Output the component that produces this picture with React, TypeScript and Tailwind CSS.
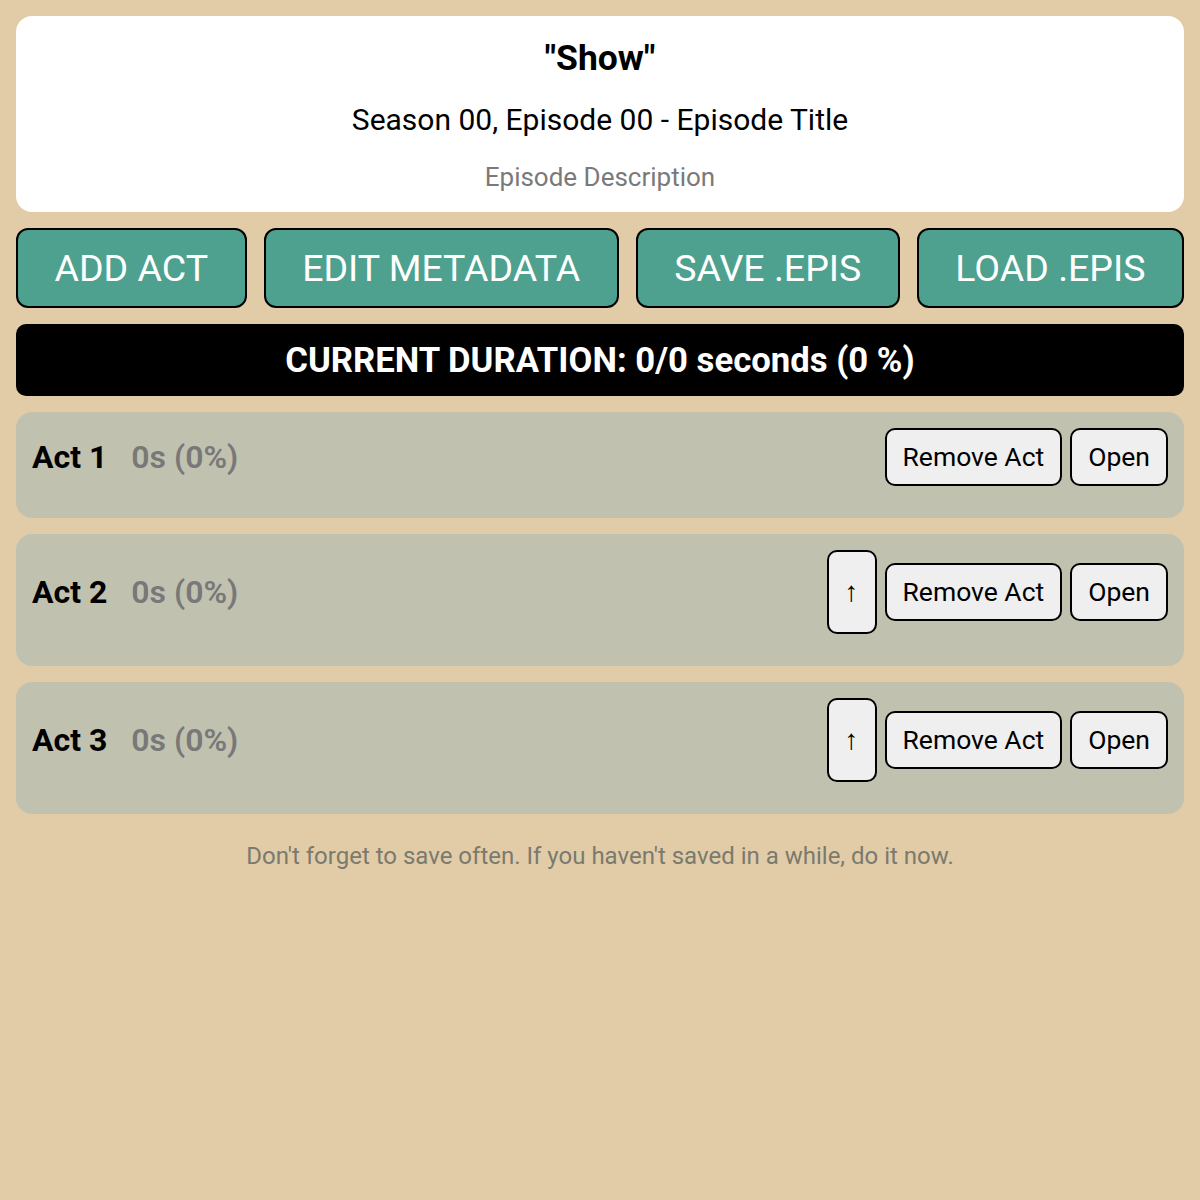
const acts = [
  { name: 'Act 1', up: false },
  { name: 'Act 2', up: true },
  { name: 'Act 3', up: true },
]

function ActRow({ name, up }: { name: string; up: boolean }) {
  return (
    <div className="rounded-2xl bg-[#c1c1b0] p-4 pb-8">
      <div className="flex items-center justify-between">
        <div className="flex items-center gap-[24px] text-[32px] font-bold">
          <span className="text-black">{name}</span>
          <span className="font-semibold text-[#787878]">0s (0%)</span>
        </div>
        <div className="flex items-center gap-2">
          {up && (
            <button className="h-[84px] w-[50px] rounded-[10px] border-2 border-black bg-[#efefef] text-[28px] leading-none text-black">
              ↑
            </button>
          )}
          <button className="h-[58px] rounded-[10px] border-2 border-black bg-[#efefef] px-[16px] text-[26.5px] text-black">
            Remove Act
          </button>
          <button className="h-[58px] rounded-[10px] border-2 border-black bg-[#efefef] px-[16px] text-[26.5px] text-black">
            Open
          </button>
        </div>
      </div>
    </div>
  )
}

export default function App() {
  return (
    <main className="min-h-[1200px] w-full bg-[#e2cca8] p-4 font-['Roboto',sans-serif]">
      {/* Episode header */}
      <div className="flex flex-col items-center rounded-2xl bg-white pb-[19px] pt-5">
        <h1 className="text-[35.5px] font-bold leading-[44px] text-black">"Show"</h1>
        <h2 className="mt-[22px] text-[30px] leading-[36px] text-black">Season 00, Episode 00 - Episode Title</h2>
        <p className="mt-[23px] text-[26px] leading-[32px] text-[#7a7a7a]">Episode Description</p>
      </div>

      {/* Actions */}
      <div className="mt-4 flex gap-[17px]">
        {['ADD ACT', 'EDIT METADATA', 'SAVE .EPIS', 'LOAD .EPIS'].map((label) => (
          <button
            key={label}
            className="h-20 flex-auto rounded-xl border-2 border-black bg-[#4ea18e] px-9 text-[37.5px] text-white"
          >
            {label}
          </button>
        ))}
      </div>

      {/* Duration */}
      <div className="mt-4 flex h-[72px] items-center justify-center rounded-[10px] bg-black text-[34.7px] font-bold text-white">
        CURRENT DURATION: 0/0 seconds (0 %)
      </div>

      <div className="mt-4 flex flex-col gap-4">
        {acts.map((a) => (
          <ActRow key={a.name} {...a} />
        ))}
      </div>

      <p className="mt-6 text-center text-[24px] text-[#7a7a6e]">
        Don't forget to save often. If you haven't saved in a while, do it now.
      </p>
    </main>
  )
}
